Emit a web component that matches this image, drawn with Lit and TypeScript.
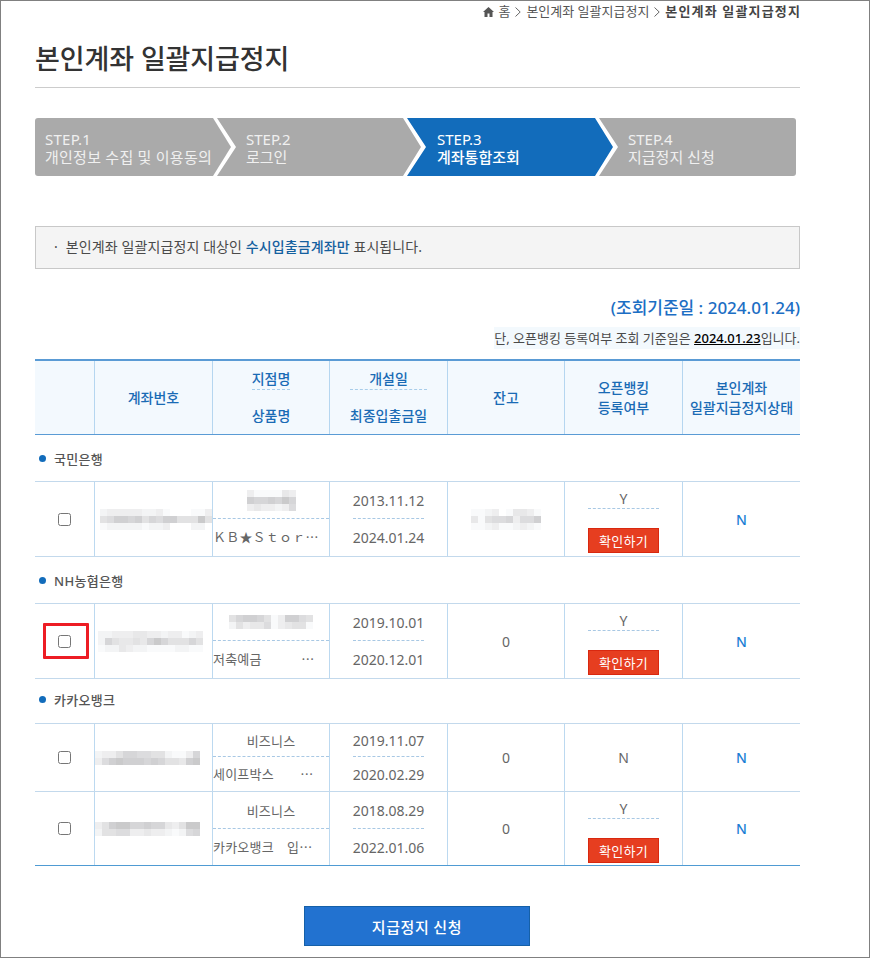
import { LitElement, html, css, svg } from "lit";
import { customElement } from "lit/decorators.js";

const SHADE: Record<string, string> = {
  "0": "#c4c4c6", "1": "#cacacb", "2": "#d0d0d2", "3": "#d6d6d8", "4": "#dcdcde",
  "5": "#e2e2e3", "6": "#e8e8e9", "7": "#eeeeef", "8": "#f3f4f5", "9": "#f9fafb",
};

interface Blur { rows: string[]; dx?: number; }

const mosaic = (b: Blur) => {
  const cols = Math.max(...b.rows.map((r) => r.length));
  return html`<svg class="mosaic" style="margin-left:${b.dx ?? 0}px" width=${cols * 7} height=${b.rows.length * 7} shape-rendering="crispEdges" aria-hidden="true">
    ${b.rows.map((row, y) =>
      [...row].map((c, x) => (SHADE[c] ? svg`<rect x=${x * 7} y=${y * 7} width="7" height="7" fill=${SHADE[c]}></rect>` : null)),
    )}
  </svg>`;
};

interface Row {
  tall: boolean;
  account: Blur;
  branch: string | Blur;
  product: string;
  opened: string;
  last: string;
  balance: string | Blur;
  open: "Y" | "N";
  flagged?: boolean;
}
interface Group { bank: string; cls: string; rows: Row[]; }

const GROUPS: Group[] = [
  {
    bank: "국민은행",
    cls: "",
    rows: [
      {
        tall: true,
        account: { dx: 5, rows: ["8777778879...997", "5422325342255515", "9888889887...88"] },
        branch: { rows: ["7999967", "2332313", "7677874"] },
        product: "ＫＢ★Ｓｔｏｒｙ　　　　",
        opened: "2013.11.12",
        last: "2024.01.24",
        balance: { rows: ["9987.96679", "6954437442", "9987998789"] },
        open: "Y",
      },
    ],
  },
  {
    bank: "NH농협은행",
    cls: "",
    rows: [
      {
        tall: true,
        flagged: true,
        account: { dx: 3, rows: ["887776677877987", "835665631355535", "988678899998899"] },
        branch: { rows: ["532235972245", "857664976559"] },
        product: "저축예금　　　　　　　　",
        opened: "2019.10.01",
        last: "2020.12.01",
        balance: "0",
        open: "Y",
      },
    ],
  },
  {
    bank: "카카오뱅크",
    cls: "short-head",
    rows: [
      {
        tall: false,
        account: { dx: 0, rows: ["877533445589973", "742122232355621"] },
        branch: "비즈니스",
        product: "세이프박스　　　　　　　",
        opened: "2019.11.07",
        last: "2020.02.29",
        balance: "0",
        open: "N",
      },
      {
        tall: true,
        account: { dx: 0, rows: ["752113323367511", "855447767789843"] },
        branch: "비즈니스",
        product: "카카오뱅크　입출금통장",
        opened: "2018.08.29",
        last: "2022.01.06",
        balance: "0",
        open: "Y",
      },
    ],
  },
];

const STEPS = [
  { n: "STEP.1", t: "개인정보 수집 및 이용동의", cls: "s1" },
  { n: "STEP.2", t: "로그인", cls: "s2" },
  { n: "STEP.3", t: "계좌통합조회", cls: "s3 on" },
  { n: "STEP.4", t: "지급정지 신청", cls: "s4" },
];

const chevron = html`<svg class="crumb-sep" width="6" height="10" viewBox="0 0 6 10" aria-hidden="true"><polyline points="0.5,0.5 5.2,5 0.5,9.5" fill="none" stroke="#666" stroke-width="1"></polyline></svg>`;

@customElement("app-root")
export class AppRoot extends LitElement {
  static styles = css`
    :host {
      display: block;
      font-family: "Noto Sans", "Noto Sans CJK KR", sans-serif;
      color: #555;
    }
    * { box-sizing: border-box; }
    .page {
      width: 870px;
      height: 958px;
      border: 1px solid #808080;
      padding: 0 69px 0 34px;
      background: #fff;
      overflow: hidden;
    }
    .crumbs {
      height: 21px;
      display: flex;
      justify-content: flex-end;
      align-items: center;
      gap: 5px;
      font-size: 13px;
      color: #555;
      line-height: 21px;
      white-space: nowrap;
    }
    .home { display: flex; align-items: center; gap: 4px; }
    .crumbs b { font-weight: 700; color: #444; letter-spacing: 1.15px; margin-right: -1px; }
    .title {
      margin: 0;
      height: 66px;
      padding-top: 17px;
      border-bottom: 1px solid #ccc;
      font-size: 27px;
      line-height: 40px;
      font-weight: 500;
      color: #333;
      letter-spacing: -0.1px;
      white-space: nowrap;
    }
    .steps { display: flex; margin: 30px 4px 0 0; height: 58px; }
    .step {
      height: 58px;
      margin-left: -14px;
      background: #aaa;
      color: #f0f0f0;
      font-size: 15px;
      line-height: 18px;
      padding-top: 12px;
      white-space: nowrap;
      clip-path: polygon(0 0, calc(100% - 18px) 0, 100% 50%, calc(100% - 18px) 100%, 0 100%, 19px 50%);
    }
    .step span { display: block; }
    .s1 { flex: 0 0 196px; margin-left: 0; padding-left: 10px; border-radius: 3px 0 0 3px; clip-path: polygon(0 0, calc(100% - 18px) 0, 100% 50%, calc(100% - 18px) 100%, 0 100%); letter-spacing: 0.25px; }
    .s2 { flex: 0 0 204px; padding-left: 29px; }
    .s3 { flex: 0 0 206px; padding-left: 30px; }
    .s4 { flex: 1 1 auto; padding-left: 29px; border-radius: 0 3px 3px 0; clip-path: polygon(0 0, 100% 0, 100% 100%, 0 100%, 19px 50%); }
    .step.on { background: #126cbb; color: #fff; }
    .step.on .t { font-weight: 500; }
    .info {
      margin-top: 50px;
      height: 43px;
      border: 1px solid #c8c8c8;
      background: #f4f4f4;
      display: flex;
      align-items: center;
      padding: 0 0 3px 18px;
      font-size: 14px;
      color: #4a4a4a;
      letter-spacing: 0.1px;
      white-space: nowrap;
    }
    .info .dot { margin-right: 8px; }
    .info strong { color: #14609f; font-weight: 500; }
    .basis {
      margin-top: 26px;
      height: 26px;
      line-height: 26px;
      text-align: right;
      font-size: 17px;
      font-weight: 500;
      color: #1c6ec4;
    }
    .note-wrap { display: flex; justify-content: flex-end; margin-top: 6px; }
    .note {
      height: 22px;
      line-height: 22px;
      background: #f3f9fd;
      padding-left: 0;
      font-size: 13px;
      color: #4a4a4a;
      white-space: nowrap;
    }
    .note u { color: #000; font-weight: 500; }
    .table { margin-top: 10px; font-size: 14px; }
    .cols { display: grid; grid-template-columns: 59px 118px 117px 118px 117px 118px 118px; }
    .thead {
      height: 76px;
      border-top: 2px solid #5a9bd5;
      border-bottom: 1px solid #5a9bd5;
      background: #f3f9fe;
      color: #1a6bb5;
      font-weight: 500;
      text-align: center;
      line-height: 20px;
    }
    .th { border-left: 1px solid #b5d6f0; display: flex; align-items: center; justify-content: center; }
    .th:first-child { border-left: 0; }
    .th-split { display: grid; grid-template-rows: 36px 37px; }
    .th-split > div { display: flex; align-items: center; justify-content: center; }
    .th-split > div:first-child { border-bottom: 1px dashed #a8cdea; }
    .bank {
      height: 46px;
      display: flex;
      align-items: center;
      gap: 8px;
      padding-left: 4px;
      font-size: 13px;
      font-weight: 500;
      letter-spacing: 0.3px;
      color: #555;
    }
    .bank.short-head { height: 44px; padding-bottom: 3px; }
    .bank i { width: 7px; height: 7px; border-radius: 50%; background: #126cbb; }
    .rows { border-top: 1px solid #c3d9ec; border-bottom: 1px solid #c3d9ec; }
    .rows.end { border-bottom-color: #4f9bd3; }
    .row + .row { border-top: 1px solid #c3d9ec; }
    .tall { height: 74px; }
    .short { height: 67px; }
    .td {
      border-left: 1px solid #bcd9f0;
      display: flex;
      align-items: center;
      justify-content: center;
      color: #666;
      min-width: 0;
    }
    .td:first-child { border-left: 0; position: relative; }
    .td.account { justify-content: flex-start; }
    .mosaic { display: block; }
    input[type="checkbox"] { margin: 0; width: 13px; height: 13px; }
    .flag {
      position: absolute;
      left: 8px;
      top: 19px;
      width: 46px;
      height: 36px;
      border: 3px solid #ed1c24;
      border-radius: 1px;
      pointer-events: none;
    }
    .split { display: grid; align-items: stretch; }
    .tall .split { grid-template-rows: 37px 1fr; }
    .short .split { grid-template-rows: 33px 1fr; }
    .split > div { display: flex; align-items: center; justify-content: center; min-width: 0; }
    .split > div:first-child { border-bottom: 1px dashed #a8c8e4; box-sizing: content-box; }
    .name { font-size: 13px; letter-spacing: 0.2px; }
    .product {
      display: block !important;
      font-family: "Noto Sans CJK KR", sans-serif;
      font-size: 13px;
      letter-spacing: 0.2px;
      line-height: 36px;
      white-space: pre;
      overflow: hidden;
      text-overflow: ellipsis;
      padding-right: 6px;
      text-align: left;
    }
    .short .product { line-height: 33px; }
    .openbank { display: grid; grid-template-rows: 33px 1fr; }
    .openbank > div { display: flex; align-items: center; justify-content: center; }
    .openbank > div:first-child { border-bottom: 1px dashed #a8c8e4; box-sizing: content-box; }
    .openbank > .act { align-items: flex-start; padding-top: 10px; }
    button.check {
      width: 71px;
      height: 25px;
      border: 1px solid #d9280f;
      background: #e63e20;
      color: #fff;
      font: 13px "Noto Sans CJK KR", sans-serif;
      letter-spacing: 0.3px;
      padding: 0;
    }
    .flagn { color: #1a7ed4; font-weight: 500; }
    .foot { display: flex; justify-content: center; margin-top: 40px; padding-right: 1px; }
    button.apply {
      width: 226px;
      height: 40px;
      background: #2272d0;
      border: 1px solid #1560a8;
      color: #fff;
      font: 500 15px "Noto Sans CJK KR", sans-serif;
      letter-spacing: 0.6px;
      padding: 0;
    }
  `;

  private renderRow(r: Row) {
    return html`<div class="row cols ${r.tall ? "tall" : "short"}">
      <div class="td">
        <input type="checkbox" aria-label="선택" />
        ${r.flagged ? html`<span class="flag"></span>` : null}
      </div>
      <div class="td account">${mosaic(r.account)}</div>
      <div class="td split">
        <div class="name">${typeof r.branch === "string" ? r.branch : mosaic(r.branch)}</div>
        <div class="product">${r.product}</div>
      </div>
      <div class="td split">
        <div>${r.opened}</div>
        <div>${r.last}</div>
      </div>
      <div class="td">${typeof r.balance === "string" ? r.balance : mosaic(r.balance)}</div>
      ${r.open === "Y"
        ? html`<div class="td openbank">
            <div>Y</div>
            <div class="act"><button class="check">확인하기</button></div>
          </div>`
        : html`<div class="td">N</div>`}
      <div class="td flagn">N</div>
    </div>`;
  }

  render() {
    return html`<div class="page">
      <nav class="crumbs">
        <span class="home">
          <svg width="11" height="10" viewBox="0 0 11 10" aria-hidden="true"><polygon points="5.5,0 11,5 9.5,5 9.5,10 6.5,10 6.5,6.5 4.5,6.5 4.5,10 1.5,10 1.5,5 0,5" fill="#555"></polygon></svg>
          홈
        </span>
        ${chevron}
        <span>본인계좌 일괄지급정지</span>
        ${chevron}
        <b>본인계좌 일괄지급정지</b>
      </nav>
      <h1 class="title">본인계좌 일괄지급정지</h1>

      <div class="steps">
        ${STEPS.map(
          (s) => html`<div class="step ${s.cls}"><span>${s.n}</span><span class="t">${s.t}</span></div>`,
        )}
      </div>

      <div class="info">
        <span class="dot">·</span>
        <span>본인계좌 일괄지급정지 대상인 <strong>수시입출금계좌만</strong> 표시됩니다.</span>
      </div>

      <div class="basis">(조회기준일 : 2024.01.24)</div>
      <div class="note-wrap">
        <div class="note">단, 오픈뱅킹 등록여부 조회 기준일은 <u>2024.01.23</u>입니다.</div>
      </div>

      <div class="table">
        <div class="thead cols">
          <div class="th"></div>
          <div class="th">계좌번호</div>
          <div class="th th-split"><div>지점명</div><div>상품명</div></div>
          <div class="th th-split"><div>개설일</div><div>최종입출금일</div></div>
          <div class="th">잔고</div>
          <div class="th">오픈뱅킹<br />등록여부</div>
          <div class="th">본인계좌<br />일괄지급정지상태</div>
        </div>
        ${GROUPS.map(
          (g, i) => html`
            <div class="bank ${g.cls}"><i></i>${g.bank}</div>
            <div class="rows ${i === GROUPS.length - 1 ? "end" : ""}">${g.rows.map((r) => this.renderRow(r))}</div>
          `,
        )}
      </div>

      <div class="foot"><button class="apply">지급정지 신청</button></div>
    </div>`;
  }
}
